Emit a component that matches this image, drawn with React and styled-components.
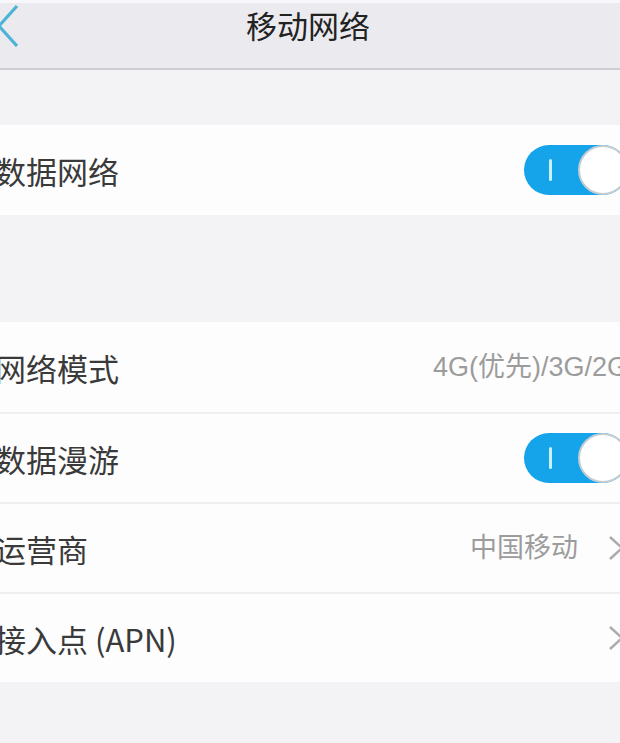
import styled, { createGlobalStyle } from "styled-components"

const GlobalStyle = createGlobalStyle`
  html, body {
    margin: 0;
    padding: 0;
    background: #f3f3f5;
  }
  body {
    font-family: "Noto Sans CJK SC", "Noto Sans", sans-serif;
  }
`

const Page = styled.div`
  width: 620px;
  height: 743px;
  overflow: hidden;
  background: #f3f3f5;
`

const NavBar = styled.header`
  display: grid;
  grid-template-columns: 60px 1fr 60px;
  align-items: start;
  height: 65px;
  border-top: 3px solid #f8f8fa;
  border-bottom: 2px solid #cdcdd1;
  background: #ebebef;
`

const BackIcon = styled.svg`
  display: block;
  margin: 2px 0 0 -3px;
`

const Title = styled.h1`
  margin: 0;
  padding-top: 6px;
  padding-right: 4px;
  text-align: center;
  font-size: 31px;
  line-height: 31px;
  font-weight: 400;
  color: #222222;
`

const Screen = styled.main`
  margin-left: -5px;
  width: 638px;
`

const Group = styled.section`
  margin-top: ${(p) => p.$gap}px;
  background: #fdfdfd;
`

const Row = styled.div`
  display: flex;
  align-items: center;
  box-sizing: border-box;
  height: 90px;
  padding-right: 5px;

  & + & {
    border-top: 2px solid #efeff0;
  }
`

const Label = styled.span`
  flex: 1;
  font-size: 31px;
  line-height: 1;
  color: #3a3a3a;
`

const Value = styled.span`
  font-family: "Liberation Sans", "Noto Sans CJK SC", sans-serif;
  font-size: 27px;
  line-height: 1;
  color: #9c9c9c;
`

const Chevron = styled.svg`
  display: block;
  margin: 0 4px 0 30px;
`

const Switch = styled.div`
  display: flex;
  align-items: center;
  justify-content: space-between;
  box-sizing: border-box;
  width: 104px;
  height: 50px;
  padding-left: 25px;
  border-radius: 25px;
  background: #15a3e9;
`

const Mark = styled.span`
  width: 3px;
  height: 22px;
  border-radius: 2px;
  background: #c9f0fb;
`

const Knob = styled.span`
  box-sizing: border-box;
  width: 50px;
  height: 50px;
  border-radius: 50%;
  border: 2px solid #c4cdd2;
  background: #ffffff;
`

function Toggle() {
  return (
    <Switch>
      <Mark />
      <Knob />
    </Switch>
  )
}

function Arrow() {
  return (
    <Chevron width="16" height="26" viewBox="0 0 16 26">
      <path d="M2 2 L14 13 L2 24" fill="none" stroke="#ababab" strokeWidth="2.5" />
    </Chevron>
  )
}

export default function App() {
  return (
    <Page>
      <GlobalStyle />
      <NavBar>
        <BackIcon width="22" height="42" viewBox="0 0 22 42">
          <path d="M20 1 L2 21 L20 41" fill="none" stroke="#4fb3d6" strokeWidth="3.2" />
        </BackIcon>
        <Title>移动网络</Title>
        <span />
      </NavBar>
      <Screen>
        <Group $gap={55}>
          <Row>
            <Label>数据网络</Label>
            <Toggle />
          </Row>
        </Group>
        <Group $gap={107}>
          <Row>
            <Label>网络模式</Label>
            <Value>4G(优先)/3G/2G</Value>
          </Row>
          <Row>
            <Label>数据漫游</Label>
            <Toggle />
          </Row>
          <Row>
            <Label>运营商</Label>
            <Value>中国移动</Value>
            <Arrow />
          </Row>
          <Row>
            <Label>接入点 (APN)</Label>
            <Arrow />
          </Row>
        </Group>
      </Screen>
    </Page>
  )
}
